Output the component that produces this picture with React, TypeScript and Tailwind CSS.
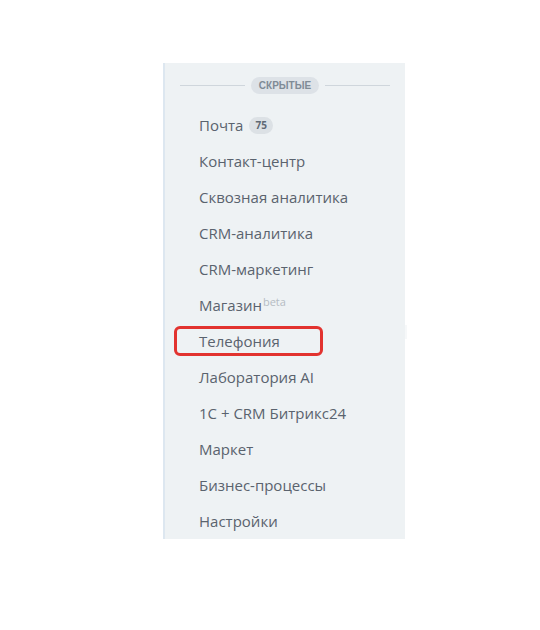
const items = [
  'Почта',
  'Контакт-центр',
  'Сквозная аналитика',
  'CRM-аналитика',
  'CRM-маркетинг',
  'Магазин',
  'Телефония',
  'Лаборатория AI',
  '1С + CRM Битрикс24',
  'Маркет',
  'Бизнес-процессы',
  'Настройки',
];

export default function App() {
  return (
    <div className="min-h-[630px] bg-white pl-[163px] pt-[63px] font-['Open_Sans',sans-serif]">
      <div className="relative w-[242px] border-l-2 border-[#dde7f0] bg-[#eef2f4]">
        <div className="flex items-center gap-[6px] pl-[15px] pr-[15px] pt-[14px]">
          <div className="h-px flex-1 bg-[#cfd6dc]" />
          <span className="flex h-[17px] items-center rounded-full bg-[#dde2e7] px-[8px] font-['Liberation_Sans',sans-serif] text-[10px] font-bold text-[#7f8b96]">
            СКРЫТЫЕ
          </span>
          <div className="h-px flex-1 bg-[#cfd6dc]" />
        </div>

        <div className="mt-[13px]">
          {items.map((item) => (
            <div key={item} className="relative flex h-9 items-center pl-[34px] text-[15px] text-[#5a636e]">
              <span>
                {item}
                {item === 'Магазин' && (
                  <span className="relative -top-[5px] ml-[1px] text-[11px] text-[#b5bcc3]">beta</span>
                )}
              </span>
              {item === 'Почта' && (
                <span className="ml-[6px] flex h-[17px] items-center rounded-full bg-[#dce1e5] px-[6px] text-[10px] font-bold text-[#5f6974]">
                  75
                </span>
              )}
              {item === 'Телефония' && (
                <span className="absolute left-[9px] top-[3px] h-[30px] w-[149px] rounded-[6px] border-[3px] border-[#e2332f]" />
              )}
            </div>
          ))}
        </div>

        <div className="absolute right-[-2px] top-[262px] h-[14px] w-[2px] bg-[#f6f8f9]" />
      </div>
    </div>
  );
}
